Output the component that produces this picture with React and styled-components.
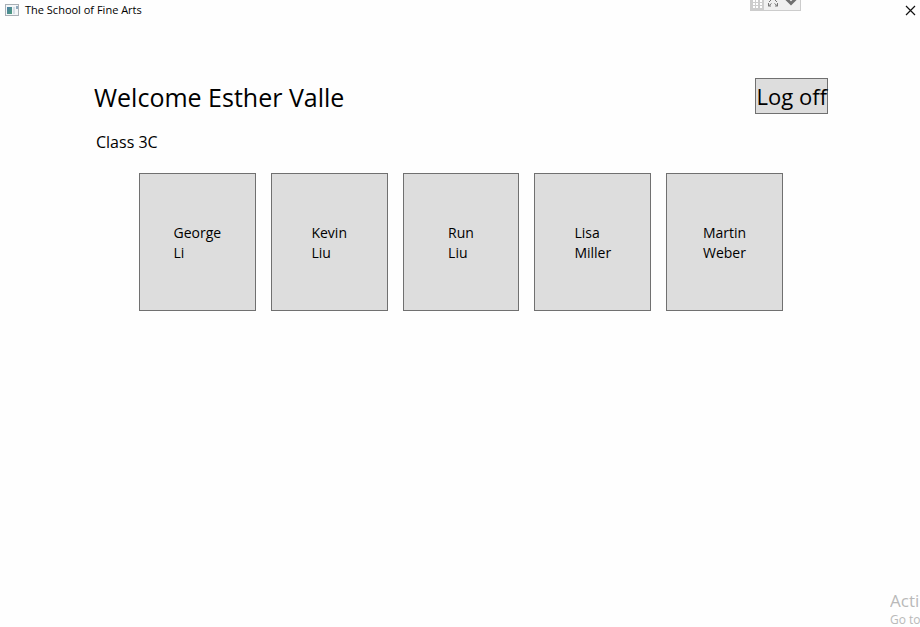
import React from "react";
import styled, { createGlobalStyle } from "styled-components";

const GlobalStyle = createGlobalStyle`
  * { box-sizing: border-box; }
  html, body { margin: 0; background: #fefefe; }
  body { font-family: "Open Sans", "Noto Sans", sans-serif; color: #000; }
  button { font-family: inherit; color: inherit; cursor: pointer; }
`;

const Window = styled.div`
  position: relative;
  min-height: 100vh;
  overflow: hidden;
`;

const TitleBar = styled.header`
  display: flex;
  align-items: center;
  gap: 6px;
  height: 20px;
  padding: 0 4px 0 5px;
`;

const WindowTitle = styled.span`
  flex: 1;
  font-size: 11px;
  line-height: 20px;
`;

const CloseButton = styled.button`
  display: flex;
  padding: 0;
  border: 0;
  background: none;
`;

const DebugBar = styled.div`
  position: absolute;
  top: 0;
  right: 119px;
  display: flex;
  height: 11px;
  border: solid #cccccc;
  border-width: 0 1px 1px 0;
  background: #f0f0f0;
`;

const Main = styled.main`
  padding: 58px 92px 0 94px;
`;

const Heading = styled.div`
  display: flex;
  justify-content: space-between;
  align-items: center;
`;

const Welcome = styled.h1`
  margin: 0;
  padding-top: 2px;
  font-size: 25px;
  line-height: 34px;
  font-weight: 400;
`;

const LogOff = styled.button`
  height: 36px;
  padding: 0 0 0 1px;
  border: 1px solid #707070;
  background: #dddddd;
  font-size: 22px;
  line-height: 34px;
`;

const ClassName = styled.h2`
  margin: 16px 0 0 2px;
  font-size: 16px;
  line-height: 24px;
  font-weight: 400;
`;

const Students = styled.div`
  display: grid;
  grid-template-columns: repeat(5, 1fr);
  gap: 15px;
  margin: 19px 45px 0;
`;

const Student = styled.button`
  display: flex;
  justify-content: center;
  align-items: center;
  height: 138px;
  padding: 2px 0 0;
  border: 1px solid #707070;
  background: #dddddd;
  font-size: 14px;
  line-height: 20px;
  text-align: left;
`;

const Notice = styled.aside`
  position: absolute;
  right: 0;
  bottom: 0;
  width: 30px;
  height: 37px;
  overflow: hidden;
  white-space: nowrap;
  color: #b9b9b9;
`;

const NoticeTitle = styled.div`
  font-size: 17px;
  line-height: 22px;
`;

const NoticeText = styled.div`
  font-size: 12px;
  line-height: 16px;
`;

const students = [
  ["George", "Li"],
  ["Kevin", "Liu"],
  ["Run", "Liu"],
  ["Lisa", "Miller"],
  ["Martin", "Weber"],
];

function AppIcon() {
  return (
    <svg width="14" height="13" viewBox="0 0 14 13" aria-hidden="true">
      <defs>
        <linearGradient id="pane" x1="0" y1="0" x2="1" y2="1">
          <stop offset="0" stopColor="#4c7fa6" />
          <stop offset="1" stopColor="#4d9c7b" />
        </linearGradient>
      </defs>
      <rect x="0.5" y="0.5" width="13" height="11" fill="#f4f6f8" stroke="#a9b0b6" />
      <rect x="2" y="3" width="5" height="7" fill="url(#pane)" />
      <rect x="8" y="3" width="2" height="7" fill="#d5dfe6" />
      <rect x="11" y="2" width="2" height="3" fill="#8fa9bd" />
    </svg>
  );
}

function DebugIcons() {
  return (
    <svg width="50" height="10" viewBox="0 0 50 10" aria-hidden="true">
      <rect width="14" height="10" fill="#cdcdcd" />
      {[
        [0, 2],
        [3, 2],
        [6, 2],
      ].map(([y, h]) =>
        [3, 6, 10].map((x) => <rect key={`${x}-${y}`} x={x} y={y} width="2" height={h} fill="#fff" />)
      )}
      <g stroke="#777" fill="none">
        <path d="M19 2 21 0M27 2 25 0M18.500 3V6H21M18.500 6 21.500 3.500M27.500 3V6H25M27.500 6 24.500 3.500" />
        <path d="M36.500 -1 41 3.500 45.500 -1" stroke="#707070" strokeWidth="3" />
      </g>
    </svg>
  );
}

export default function App() {
  return (
    <>
      <GlobalStyle />
      <Window>
        <TitleBar>
          <AppIcon />
          <WindowTitle>The School of Fine Arts</WindowTitle>
          <CloseButton type="button" aria-label="Close">
            <svg width="11" height="11" viewBox="0 0 11 11" aria-hidden="true">
              <path d="M1 1 10 10M10 1 1 10" stroke="#111" strokeWidth="1.200" />
            </svg>
          </CloseButton>
        </TitleBar>
        <DebugBar>
          <DebugIcons />
        </DebugBar>
        <Main>
          <Heading>
            <Welcome>Welcome Esther Valle</Welcome>
            <LogOff type="button">Log off</LogOff>
          </Heading>
          <ClassName>Class 3C</ClassName>
          <Students>
            {students.map(([first, last]) => (
              <Student type="button" key={`${first} ${last}`}>
                <span>
                  {first}
                  <br />
                  {last}
                </span>
              </Student>
            ))}
          </Students>
        </Main>
        <Notice>
          <NoticeTitle>Acti</NoticeTitle>
          <NoticeText>Go to</NoticeText>
        </Notice>
      </Window>
    </>
  );
}
